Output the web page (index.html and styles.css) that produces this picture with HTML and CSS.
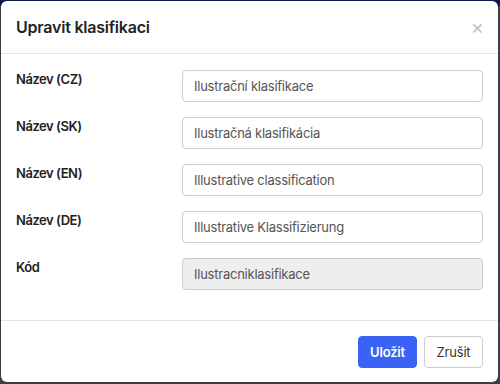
FILE: index.html
```html
<!DOCTYPE html>
<html>
<head>
<meta charset="utf-8">
<link rel="stylesheet" href="styles.css">
</head>
<body>
<div class="backdrop">
  <div class="modal">
    <div class="modal-header">
      <h1 class="modal-title">Upravit klasifikaci</h1>
      <span class="close">&times;</span>
    </div>
    <div class="modal-body">
      <label class="label">Název (CZ)</label>
      <div class="input">Ilustrační klasifikace</div>
      <label class="label">Název (SK)</label>
      <div class="input">Ilustračná klasifikácia</div>
      <label class="label">Název (EN)</label>
      <div class="input">Illustrative classification</div>
      <label class="label">Název (DE)</label>
      <div class="input">Illustrative Klassifizierung</div>
      <label class="label">Kód</label>
      <div class="input disabled">Ilustracniklasifikace</div>
    </div>
    <div class="modal-footer">
      <button class="btn btn-primary">Uložit</button>
      <button class="btn btn-default">Zrušit</button>
    </div>
  </div>
</div>
</body>
</html>
```
FILE: styles.css
```css
html, body {
  margin: 0;
  padding: 0;
  width: 500px;
  height: 384px;
  overflow: hidden;
}
body {
  font-family: Inter, "Noto Sans", sans-serif;
  background: #3d3d3f;
}
.backdrop {
  width: 500px;
  height: 384px;
  box-sizing: border-box;
  padding: 1px 2px 2px 1px;
  background: linear-gradient(#0e1a4d 0, #0e1a4d 6px, #3d3d3f 6px);
}
.modal {
  background: #fff;
  border-radius: 6px;
  height: 100%;
  display: flex;
  flex-direction: column;
}
.modal-header {
  display: flex;
  align-items: center;
  justify-content: space-between;
  height: 53px;
  box-sizing: border-box;
  padding: 0 16px 0 15px;
  border-bottom: 1px solid #e5e5e5;
}
.modal-title {
  margin: 0;
  font-size: 16px;
  font-weight: 600;
  color: #222;
  letter-spacing: -0.22px;
}
.close {
  font-size: 20px;
  color: #c4c4c4;
  line-height: 1;
  margin-right: -2px;
}
.modal-body {
  display: grid;
  grid-template-columns: 166px 1fr;
  row-gap: 15px;
  padding: 16px 15px 30px 15px;
  border-bottom: 1px solid #e5e5e5;
}
.label {
  font-size: 13px;
  font-weight: 600;
  color: #222;
  line-height: 16px;
  padding-top: 1px;
  letter-spacing: -0.45px;
}
.input {
  height: 32px;
  box-sizing: border-box;
  border: 1px solid #ccc;
  border-radius: 4px;
  padding: 0 11px;
  display: flex;
  align-items: center;
  font-size: 13px;
  color: #555;
  letter-spacing: -0.24px;
}
.input.disabled {
  background: #eee;
}
.modal-footer {
  display: flex;
  justify-content: flex-end;
  gap: 7px;
  padding: 15px 15px 0 15px;
}
.btn {
  height: 32px;
  width: 59px;
  border-radius: 4px;
  font-family: Inter, "Noto Sans", sans-serif;
  font-size: 13px;
  padding: 0;
  cursor: pointer;
  letter-spacing: -0.2px;
}
.btn-primary {
  background: #3a62f5;
  border: 1px solid #3a62f5;
  color: #fff;
  font-weight: 600;
}
.btn-default {
  background: #fff;
  border: 1px solid #ccc;
  color: #333;
}
```
